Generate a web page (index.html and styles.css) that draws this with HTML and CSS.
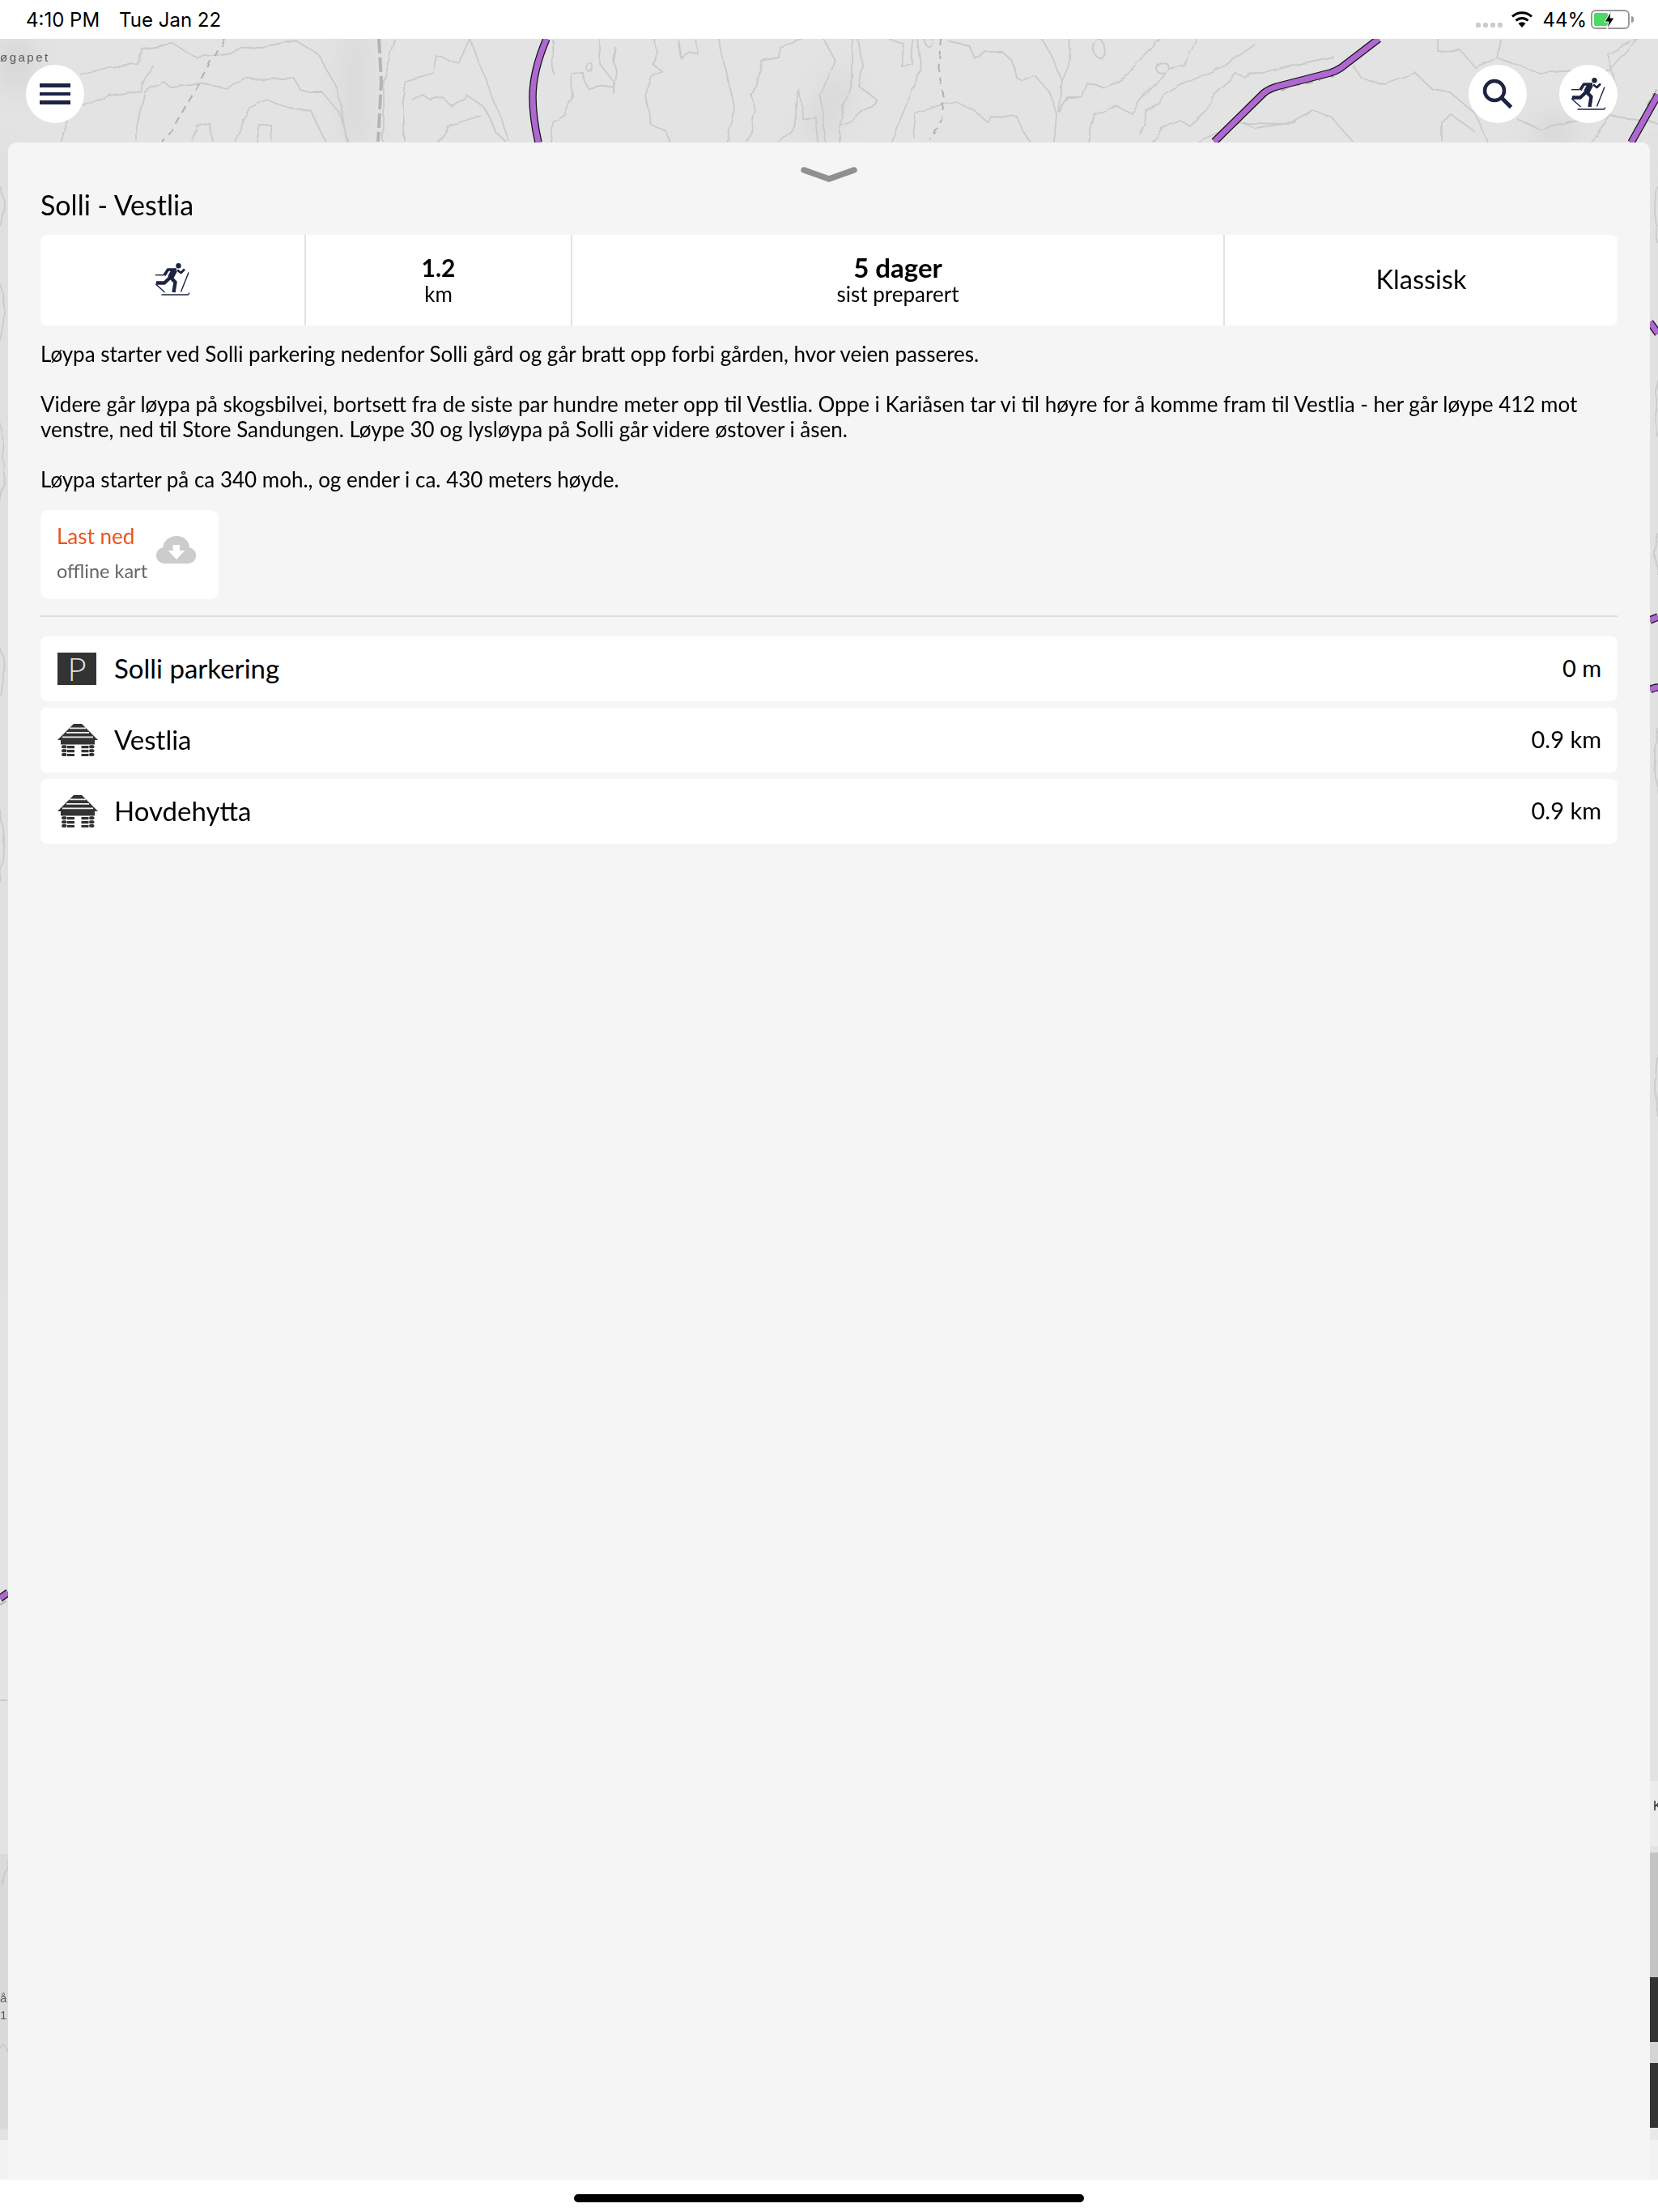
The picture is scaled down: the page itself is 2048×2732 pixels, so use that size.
FILE: index.html
```html
<!DOCTYPE html>
<html lang="nb">
<head>
  <meta charset="UTF-8" />
  <title>Solli - Vestlia</title>
  <link rel="stylesheet" href="styles.css">
</head>
<body>
  <svg class="defs" width="0" height="0">
    <symbol id="skier" viewBox="0 0 43 40">
      <circle cx="28.500" cy="3.200" r="3.200" fill="#1d2442"/>
      <g fill="none" stroke="#1d2442" stroke-linejoin="round">
        <path d="M27 8.500l4.500 3.500 4.500-4.500" stroke-width="2.800"/>
        <path d="M26 8h-10.500l-4.500 7" stroke-width="3.600"/>
        <path d="M23.500 8.500l-5 9.500" stroke-width="7.500"/>
        <path d="M19 17l-8 7.500h-10" stroke-width="4.400"/>
        <path d="M18 17l6.500 6.500-2 12.500" stroke-width="4.400"/>
        <path d="M41 11.500l-9.500 24" stroke-width="1.400"/>
        <path d="M0 14.700h10.500" stroke-width="1.400"/>
        <path d="M0 25.500l11.500 10.500" stroke-width="1.400"/>
        <path d="M7.500 39h33l1.500-2.500" stroke-width="1.400"/>
      </g>
    </symbol>
    <symbol id="cabin" viewBox="0 0 50 40">
      <path d="M20 0h10l20 20H0z" fill="#333"/>
      <path d="M15 4.500h20v1.800H15zM11 10h28v1.800H11zM6 15.500h38v1.800H6z" fill="#f0f0f0"/>
      <path d="M4 20h42v5.500H4z" fill="#333"/>
      <path d="M12 27h9v3.300h-9zM12 32h9v3.300h-9zM12 37h9v3h-9zM29.500 27h9v3.300h-9zM29.500 32h9v3.300h-9zM29.500 37h9v3h-9z" fill="#333"/>
      <g fill="#333">
        <rect x="5" y="26.200" width="6.500" height="4" rx="2"/>
        <rect x="5" y="31.200" width="6.500" height="4" rx="2"/>
        <rect x="5" y="36" width="6.500" height="4" rx="2"/>
        <rect x="39" y="26.200" width="6.500" height="4" rx="2"/>
        <rect x="39" y="31.200" width="6.500" height="4" rx="2"/>
        <rect x="39" y="36" width="6.500" height="4" rx="2"/>
      </g>
    </symbol>
  </svg>

  <div class="status-bar">
    <div class="status-time"><span>4:10 PM</span><span>Tue Jan 22</span></div>
    <div class="status-icons">
      <div class="signal-dots"><i></i><i></i><i></i><i></i></div>
      <svg class="wifi" width="28" height="20" viewBox="0 0 28 20">
        <path d="M14 20l-4.500-5a6.500 6.500 0 0 1 9 0z" fill="#000"/>
        <path d="M6.500 11.500a11 11 0 0 1 15 0" fill="none" stroke="#000" stroke-width="3"/>
        <path d="M2 6.500a17.500 17.500 0 0 1 24 0" fill="none" stroke="#000" stroke-width="3"/>
      </svg>
      <span class="battery-pct">44%</span>
      <div class="battery">
        <div class="battery-fill"></div>
        <svg class="bolt" width="14" height="22" viewBox="0 0 14 22"><path d="M9 0L1 13h5l-2 9 9-14H8z" fill="#000" stroke="#fff" stroke-width="1"/></svg>
      </div>
      <div class="battery-tip"></div>
    </div>
  </div>

  <main class="map-view">
    <svg class="map" width="2048" height="2644" viewBox="0 48 2048 2644">
      <defs>
        <filter id="soft" x="-30%" y="-30%" width="160%" height="160%"><feGaussianBlur stdDeviation="16"/></filter>
        <filter id="wiggle" x="0" y="0" width="100%" height="100%">
          <feTurbulence type="fractalNoise" baseFrequency="0.045" numOctaves="2" seed="4"/>
          <feDisplacementMap in="SourceGraphic" scale="7"/>
          <feGaussianBlur stdDeviation="0.5"/>
        </filter>
      </defs>
      <rect x="0" y="48" width="2048" height="2644" fill="#e3e3e3"/>
      <g filter="url(#soft)" fill="#d6d6d6">
        <rect x="428" y="40" width="22" height="140"/>
        <rect x="1010" y="90" width="26" height="90" transform="rotate(25 1025 135)"/>
        <rect x="0" y="50" width="40" height="60"/>
        <rect x="1900" y="145" width="40" height="40"/>
        <rect x="0" y="180" width="8" height="1400"/>
        <rect x="2042" y="180" width="6" height="1200"/>
      </g>
      <rect x="0" y="2290" width="10" height="340" fill="#dadada"/>
      <rect x="2038" y="2200" width="10" height="80" fill="#ececec"/>
      <rect x="2038" y="2288" width="10" height="154" fill="#c4c4c4"/>
      <rect x="2038" y="2522" width="10" height="26" fill="#d4d4d4"/>
      <rect x="2038" y="2628" width="10" height="15" fill="#e8e8e8"/>
      <rect x="0" y="2643" width="2048" height="49" fill="#f2f2f2"/>
      <rect x="2038" y="2442" width="10" height="80" fill="#333"/>
      <rect x="2038" y="2548" width="10" height="80" fill="#333"/>

      <g filter="url(#wiggle)">
        <g fill="none" stroke="#cacaca" stroke-width="1.800" stroke-linejoin="round">
          <path d="M100 93L134 83 170 80 176 60 214 55 245 72 312 60 366 50 393 67 415 107 422 133 428 176"/>
          <path d="M98 133L134 118 174 112 188 80"/>
          <path d="M170 175V150L179 113 201 100 210 107 243 103 277 108 304 98 335 97 362 95 373 113 397 113 420 140 430 175"/>
          <path d="M290 175L308 133 330 123 357 133 384 137 402 175"/>
          <path d="M239 175L243 155 259 153 263 175M317 175L321 155 335 155 337 175M76 175L85 133"/>
          <path d="M487 48L473 100V175M500 175V100L536 90 540 70 567 77 580 48"/>
          <path d="M509 123L522 117 531 123 547 120 558 132 576 117 598 133 612 163 625 175"/>
          <path d="M580 48L598 93 620 150 629 175M540 175L554 155 594 143"/>
          <path d="M682 48L683 91M742 48V80L758 101V116M760 58L757 75 762 88 759 111"/>
          <path d="M758 108L747 106 727 110 722 101 720 90 705 91 707 118 697 143 683 151 680 176"/>
          <path d="M808 48L810 65 807 80 818 88 805 95 797 118 805 155 822 161 827 176"/>
          <path d="M838 48L842 73 850 63 862 65 858 48M888 48L897 91 907 135 900 161 897 176"/>
          <path d="M993 48L963 58 962 71 940 75 933 108 928 118 933 136 927 161 923 176"/>
          <path d="M963 176L983 155V128L987 111 990 131 992 148 1007 145 1010 176"/>
          <path d="M1017 48L1032 75 1013 118 1017 148 1020 176M1053 48V98L1037 148V176"/>
          <path d="M1060 48L1065 81 1060 106 1083 123 1053 148 1037 155"/>
          <path d="M1098 48L1117 55 1113 81 1125 78 1127 48M1133 48L1137 81 1130 105 1100 176"/>
          <path d="M1172 51L1197 56 1205 73 1217 63 1237 63 1250 75 1255 95 1263 100 1280 95 1297 115 1305 141 1302 176"/>
          <path d="M1127 168L1130 141 1157 131 1180 125 1203 136 1220 151 1223 143 1257 145 1263 161 1273 176"/>
          <path d="M1287 48L1300 71 1312 100 1307 138M1323 48L1320 81 1312 100"/>
          <path d="M1307 138L1318 120 1337 120 1343 103 1365 108 1400 85 1433 48"/>
          <path d="M1345 176L1353 141 1380 131 1398 140 1413 120 1443 85 1463 81 1478 48"/>
          <path d="M1408 165L1417 138 1440 116 1457 106 1513 81 1550 55"/>
          <path d="M1423 176L1440 155 1457 148 1470 156 1490 138 1497 118 1527 91 1537 95 1543 88 1560 91 1600 80 1647 70"/>
          <path d="M1477 176L1533 151 1550 158 1600 151"/>
          <path d="M1671 80L1682 97 1710 103 1748 90 1769 110 1790 113 1822 140 1837 175"/>
          <path d="M1776 48V63L1804 62 1822 83 1849 72 1853 48M1849 72L1902 90 1947 87 1989 87 2024 48"/>
          <path d="M1535 152L1594 153 1622 137 1643 143 1671 175M1780 173V150L1794 143 1822 163"/>
          <path d="M1874 147L1902 160 1958 147M1965 175L1989 143 2017 147 2048 153M1996 107L1986 67 2021 48"/>
          <ellipse cx="1435" cy="83" rx="8" ry="7"/>
          <ellipse cx="1358" cy="60" rx="7" ry="11"/>
          <ellipse cx="728" cy="83" rx="3" ry="6"/>
          <ellipse cx="1147" cy="50" rx="5" ry="7"/>
          <path d="M0 230Q8 250 0 280M0 350Q10 380 0 420M0 520Q8 560 4 600L0 620M0 800Q9 830 2 860M0 1000Q8 1040 0 1090M0 2101H10M0 2330Q8 2310 10 2300M0 2530Q6 2520 10 2535"/>
          <path d="M2048 230Q2040 260 2048 300M2048 470Q2042 500 2048 540M2048 660Q2040 680 2048 710M2048 900Q2040 940 2048 980M2048 1300Q2042 1340 2048 1380"/>
        </g>
        <g fill="none" stroke="#b0b0b0" stroke-width="2" stroke-dasharray="9 7">
          <path d="M277 48L250 97 214 157 200 175"/>
          <path d="M1163 48L1160 91 1166 121 1163 148 1150 173"/>
          <path d="M1566 115L1647 93M2035 133L2048 107"/>
          <path d="M0 1982L10 1976"/>
        </g>
      </g>
      <path d="M468 48L471 100 467 175" fill="none" stroke="#b4b4b4" stroke-width="4" stroke-dasharray="18 5"/>

      <g fill="none" stroke="#111" stroke-width="9.500" stroke-linejoin="round">
        <path id="r1" d="M675 48C664 74 658 96 658 120C658 140 661 158 665 176"/>
        <path id="r2" d="M1500 175L1561 115Q1567 110 1577 107L1643 90Q1650 88 1656 84L1703 48"/>
        <path id="r3" d="M2015 176L2048 117"/>
        <path id="r4" d="M2038 398L2048 412"/>
        <path id="r5" d="M2038 766L2048 762"/>
        <path id="r6" d="M2038 852Q2043 849 2048 849"/>
        <path id="r7" d="M0 1974L10 1967"/>
      </g>
      <g fill="none" stroke="#ae68d0" stroke-width="7" stroke-linejoin="round">
        <use href="#r1"/><use href="#r2"/><use href="#r3"/><use href="#r4"/><use href="#r5"/><use href="#r6"/><use href="#r7"/>
      </g>
      <text class="map-label" x="0" y="76">øgapet</text>
      <text class="map-label" x="0" y="2473">å</text>
      <text class="map-label" x="0" y="2494">12</text>
      <text class="map-label-dark" x="2042" y="2236">K</text>
    </svg>

    <div class="map-controls">
      <button class="round-btn">
        <span class="hamburger"><i></i><i></i><i></i></span>
      </button>
      <div class="map-controls-right">
        <button class="round-btn">
          <svg width="42" height="42" viewBox="0 0 42 42">
            <circle cx="17" cy="17" r="12" fill="none" stroke="#1d2442" stroke-width="4.500"/>
            <path d="M25.500 25.500L37.500 37.500" stroke="#1d2442" stroke-width="5"/>
          </svg>
        </button>
        <button class="round-btn">
          <svg width="43" height="40"><use href="#skier"/></svg>
        </button>
      </div>
    </div>

    <section class="panel">
      <div class="grabber">
        <svg width="76" height="24" viewBox="0 0 76 24">
          <path d="M7 6l31 11 31-11" fill="none" stroke="#909090" stroke-width="7.500" stroke-linecap="round" stroke-linejoin="round"/>
        </svg>
      </div>
      <h1 class="trail-title">Solli - Vestlia</h1>

      <div class="stats">
        <div class="stat"><svg width="43" height="40"><use href="#skier"/></svg></div>
        <div class="stat"><strong class="stat-num">1.2</strong><span>km</span></div>
        <div class="stat"><strong>5 dager</strong><span>sist preparert</span></div>
        <div class="stat stat-type">Klassisk</div>
      </div>

      <div class="description">
        <p>Løypa starter ved Solli parkering nedenfor Solli gård og går bratt opp forbi gården, hvor veien passeres.</p>
        <p>Videre går løypa på skogsbilvei, bortsett fra de siste par hundre meter opp til Vestlia. Oppe i Kariåsen tar vi til høyre for å komme fram til Vestlia - her går løype 412 mot<br>venstre, ned til Store Sandungen. Løype 30 og lysløypa på Solli går videre østover i åsen.</p>
        <p>Løypa starter på ca 340 moh., og ender i ca. 430 meters høyde.</p>
      </div>

      <button class="download">
        <span class="download-text"><b>Last ned</b><span>offline kart</span></span>
        <svg width="50" height="34" viewBox="0 0 50 34">
          <path d="M10 34a10 10 0 0 1-1.500-19.900A17 14 0 0 1 25 0a16 14 0 0 1 16 14.200A10 10 0 0 1 40 34z" fill="#ccc"/>
          <path d="M20.500 11h8.500v7h6.300L25 29 14.700 18h5.800z" fill="#fff"/>
        </svg>
      </button>

      <hr class="divider">

      <ul class="places">
        <li class="place">
          <span class="parking-icon">P</span>
          <span class="place-name">Solli parkering</span>
          <span class="place-dist">0 m</span>
        </li>
        <li class="place">
          <svg class="cabin-icon" width="50" height="40"><use href="#cabin"/></svg>
          <span class="place-name">Vestlia</span>
          <span class="place-dist">0.9 km</span>
        </li>
        <li class="place">
          <svg class="cabin-icon" width="50" height="40"><use href="#cabin"/></svg>
          <span class="place-name">Hovdehytta</span>
          <span class="place-dist">0.9 km</span>
        </li>
      </ul>
    </section>
  </main>

  <div class="home-area"><div class="home-indicator"></div></div>
</body>
</html>
```

FILE: styles.css
```css
* {
  box-sizing: border-box;
}

body {
  margin: 0;
  width: 2048px;
  height: 2732px;
  overflow: hidden;
  background-color: #fff;
  color: #000;
  font-family: "Lato", "Liberation Sans", sans-serif;
  display: flex;
  flex-direction: column;
}

.defs {
  position: absolute;
}

/* status bar */
.status-bar {
  height: 48px;
  flex: none;
  display: flex;
  justify-content: space-between;
  align-items: center;
  padding: 0 30px 0 32px;
  font-family: "Inter", "Liberation Sans", sans-serif;
  font-size: 24px;
}

.status-time {
  display: flex;
  gap: 24px;
}

.status-icons {
  display: flex;
  align-items: center;
}

.signal-dots {
  display: flex;
  gap: 3px;
  margin: 14px 10px 0 0;
}

.signal-dots i {
  width: 6px;
  height: 6px;
  border-radius: 2px;
  background-color: #ccc;
}

.battery-pct {
  margin: 0 5px 0 11px;
}

.battery {
  position: relative;
  width: 48px;
  height: 24px;
  border: 2px solid #999;
  border-radius: 6px;
  padding: 2px;
}

.battery-fill {
  width: 17px;
  height: 100%;
  background-color: #4cd964;
  border-radius: 2px;
}

.bolt {
  position: absolute;
  left: 14px;
  top: 0;
}

.battery-tip {
  width: 3px;
  height: 8px;
  margin-left: 2px;
  background-color: #999;
  border-radius: 0 3px 3px 0;
}

/* map */
.map-view {
  position: relative;
  height: 2644px;
  flex: none;
  display: flex;
  flex-direction: column;
  padding: 0 10px;
  overflow: hidden;
}

.map {
  position: absolute;
  left: 0;
  top: 0;
}

.map-label {
  font-family: "Liberation Sans", sans-serif;
  font-size: 15px;
  letter-spacing: 2.500px;
  fill: #5a5a5a;
}

.map-label-dark {
  font-family: "Liberation Sans", sans-serif;
  font-size: 16px;
  fill: #222;
}

.map-controls {
  position: relative;
  height: 128px;
  flex: none;
  display: flex;
  justify-content: space-between;
  padding: 32px 40px 0 22px;
}

.map-controls-right {
  display: flex;
  gap: 40px;
}

.round-btn {
  width: 72px;
  height: 72px;
  padding: 0;
  border: none;
  border-radius: 50%;
  background-color: #fff;
  display: flex;
  align-items: center;
  justify-content: center;
}

.hamburger {
  display: flex;
  flex-direction: column;
  gap: 6px;
}

.hamburger i {
  display: block;
  width: 38px;
  height: 4.500px;
  background-color: #1d2442;
}

/* panel */
.panel {
  position: relative;
  flex: 1;
  padding: 0 40px;
  background-color: #f5f5f5;
  border-radius: 10px 10px 0 0;
}

.grabber {
  height: 50px;
  padding-top: 28px;
  display: flex;
  justify-content: center;
}

.trail-title {
  margin: 0;
  height: 64px;
  font-size: 34px;
  font-weight: 400;
  line-height: 54px;
}

.stats {
  height: 112px;
  display: grid;
  grid-template-columns: 326px 329px 806px 1fr;
  padding-bottom: 3px;
  background-color: #fff;
  border-radius: 8px;
}

.stat {
  display: flex;
  flex-direction: column;
  align-items: center;
  justify-content: center;
  margin-bottom: -3px;
  padding-bottom: 3px;
  border-left: 2px solid #e2e2e2;
  font-size: 26px;
  line-height: 30px;
}

.stat:first-child {
  border-left: none;
}

.stat strong {
  font-size: 33px;
  font-weight: 700;
  line-height: 36px;
}

.stat .stat-num {
  font-size: 30px;
}

.stat-type {
  font-size: 32.500px;
}

.description {
  padding-top: 20px;
  font-size: 26px;
  line-height: 31px;
  white-space: nowrap;
}

.description p {
  margin: 0 0 31px;
}

.download {
  width: 220px;
  height: 110px;
  margin-top: -9px;
  padding: 0 27px 3px 20px;
  border: none;
  border-radius: 10px;
  background-color: #fff;
  font-family: inherit;
  display: flex;
  align-items: center;
  justify-content: space-between;
  text-align: left;
}

.download svg {
  margin-top: -10px;
}

.download-text {
  display: flex;
  flex-direction: column;
  gap: 13px;
  font-size: 23.500px;
  line-height: 30px;
  color: #666;
}

.download-text b {
  font-size: 26px;
  font-weight: 400;
  color: #e9531d;
}

.divider {
  height: 2px;
  margin: 20px 0 24px;
  border: none;
  background-color: #dedede;
}

.places {
  list-style-type: none;
  margin: 0;
  padding: 0;
  display: flex;
  flex-direction: column;
  gap: 8px;
}

.place {
  height: 80px;
  padding: 0 20px 0 21px;
  display: flex;
  align-items: center;
  background-color: #fff;
  border-radius: 8px;
}

.parking-icon {
  width: 48px;
  height: 40px;
  background-color: #333;
  color: #e4e4e4;
  font-size: 40px;
  font-weight: 300;
  line-height: 40px;
  text-align: center;
}

.place-name {
  flex: 1;
  margin: 0 0 3px 22px;
  font-size: 33px;
}

.cabin-icon + .place-name {
  margin-left: 20px;
}

.place-dist {
  margin-bottom: 3px;
  font-size: 29px;
}

.home-area {
  flex: 1;
  display: flex;
  justify-content: center;
  padding-top: 18px;
}

.home-indicator {
  width: 630px;
  height: 10px;
  border-radius: 5px;
  background-color: #000;
}
```
